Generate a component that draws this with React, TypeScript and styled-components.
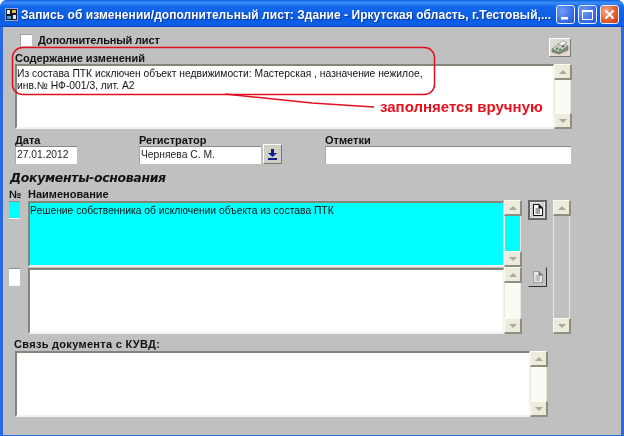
import React from "react";
import styled, { createGlobalStyle } from "styled-components";

const Global = createGlobalStyle`
  html, body { margin: 0; padding: 0; background: #fff; }
  body { width: 624px; height: 436px; overflow: hidden; font-family: "Liberation Sans", Arial, sans-serif; }
`;

const Win = styled.div`
  position: relative;
  width: 624px;
  height: 436px;
  box-sizing: border-box;
  background: #2a68e4;
  border-radius: 7px 7px 0 0;
  overflow: hidden;
  display: flex;
  flex-direction: column;
  filter: blur(0.35px);
`;

const TitleBar = styled.div`
  height: 27px;
  flex: none;
  box-sizing: border-box;
  display: flex;
  align-items: center;
  padding: 2px 5px 0 5px;
  background: linear-gradient(180deg, #1060e0 0%, #3d8ef6 10%, #1468ea 24%, #0a5ce2 70%, #0e60ea 90%, #0648c4 100%);
`;

const TitleText = styled.div`
  flex: 1;
  min-width: 0;
  margin-left: 3px;
  color: #fff;
  font: bold 12px/16px "Liberation Sans", sans-serif;
  letter-spacing: 0.05px;
  white-space: nowrap;
  text-shadow: 1px 1px 0 #0a3aa0;
`;

const WinBtn = styled.div<{ $close?: boolean }>`
  width: 19px;
  height: 19px;
  margin-left: 3px;
  flex: none;
  box-sizing: border-box;
  border: 1px solid #e8eefc;
  border-radius: 3px;
  background: ${p => (p.$close ? "radial-gradient(circle at 30% 30%, #f4a888, #dc5020 70%, #c43c14)" : "radial-gradient(circle at 30% 30%, #6f9cf4, #3468e6 70%, #2250d0)")};
  display: flex;
  align-items: center;
  justify-content: center;
`;

const Client = styled.div`
  flex: 1;
  margin: 0 3px 1px;
  background: #c0c0c0;
  padding: 7px 50px 0 6px;
  display: flex;
  flex-direction: column;
`;

const Label = styled.div`
  font: bold 11px/12px "Liberation Sans", sans-serif;
  color: #111;
  white-space: nowrap;
`;

const HeaderRow = styled.div`
  height: 30px;
  margin-left: 6px;
  display: flex;
  justify-content: space-between;
`;

const HeaderLeft = styled.div`
  display: flex;
  flex-direction: column;
  justify-content: space-between;
`;

const CheckRow = styled.div`
  display: flex;
  align-items: center;
  gap: 6px;
  padding-left: 5px;
`;

const CheckLabel = styled(Label)`
  letter-spacing: -0.15px;
`;

const CheckBox = styled.div`
  width: 12px;
  height: 12px;
  background: #fff;
  border-top: 1px solid #a0a0a0;
  border-left: 1px solid #a0a0a0;
  box-sizing: border-box;
`;

const PrintBtn = styled.div`
  width: 22px;
  height: 19px;
  margin-top: 4px;
  box-sizing: border-box;
  background: #dedcd2;
  border: 1px solid;
  border-color: #fff #777 #777 #fff;
  display: flex;
  align-items: center;
  justify-content: center;
`;

const Editor = styled.div<{ $w: number; $h: number }>`
  display: flex;
  width: ${p => p.$w}px;
  height: ${p => p.$h}px;
  margin-left: 6px;
  flex: none;
`;

const Inset = styled.div<{ $bg?: string; $top?: number }>`
  flex: 1;
  min-width: 0;
  box-sizing: border-box;
  margin-top: ${p => p.$top ?? 0}px;
  background: ${p => p.$bg || "#fff"};
  border-top: 2px solid #858578;
  border-left: 2px solid #858578;
  border-right: 1px solid #f2f2f2;
  border-bottom: 2px solid #f2f2f2;
  padding: 2px 0 0 0;
  font: 10.3px/12px "Liberation Sans", sans-serif;
  color: #111;
`;

const Scroll = styled.div<{ $track?: string }>`
  width: 17px;
  flex: none;
  display: flex;
  flex-direction: column;
  background: ${p => p.$track || "#fbfbf5"};
  box-sizing: border-box;
  border-left: 1px solid #e8e8dc;
  border-right: 1px solid #e8e8dc;
`;

const ScrollBtn = styled.div`
  height: 16px;
  width: 18px;
  margin-left: -1px;
  flex: none;
  box-sizing: border-box;
  background: #ecebdc;
  border-top: 1px solid #fbfbf2;
  border-left: 1px solid #fbfbf2;
  border-right: 2px solid #8f8f80;
  border-bottom: 2px solid #8f8f80;
  display: flex;
  align-items: center;
  justify-content: center;
`;

const Track = styled.div`
  flex: 1;
`;

const Arrow = ({ down }: { down?: boolean }) => (
  <svg width="8" height="4" viewBox="0 0 8 4">
    <path d={down ? "M0 0H8L4 4Z" : "M4 0L8 4H0Z"} fill="#aaa99a" />
  </svg>
);

const ScrollBar = ({ track, thumb }: { track?: string; thumb?: string }) => (
  <Scroll $track={track}>
    <ScrollBtn><Arrow /></ScrollBtn>
    <Track style={thumb ? { background: thumb } : undefined} />
    <ScrollBtn><Arrow down /></ScrollBtn>
  </Scroll>
);

const FieldsRow = styled.div`
  margin: 5px 0 0 6px;
  display: flex;
`;

const Field = styled.div<{ $w: number }>`
  width: ${p => p.$w}px;
  flex: none;
`;

const FieldInput = styled.div<{ $w: number }>`
  width: ${p => p.$w}px;
  height: 18px;
  box-sizing: border-box;
  background: #fff;
  border-top: 1px solid #888;
  border-left: 1px solid #aaa;
  font: 10.3px/16px "Liberation Sans", sans-serif;
  color: #222;
  padding-left: 1px;
  white-space: nowrap;
`;

const InputWithBtn = styled.div`
  display: flex;
  align-items: flex-start;
  gap: 2px;
`;

const DropBtn = styled.div`
  width: 19px;
  height: 20px;
  margin-top: -2px;
  flex: none;
  box-sizing: border-box;
  background: #cfcfc4;
  border: 1px solid;
  border-color: #fff #777 #777 #fff;
  display: flex;
  align-items: center;
  justify-content: center;
`;

const Heading = styled.div`
  margin: 6px 0 0 1px;
  font: italic bold 13px/15px "DejaVu Sans", sans-serif;
  letter-spacing: -0.35px;
  color: #111;
  transform: scaleX(0.96);
  transform-origin: left;
`;

const ColHead = styled.div`
  display: flex;
  margin-top: 3px;
  height: 12px;
`;

const NumHead = styled(Label)`
  width: 19px;
  flex: none;
`;

const Docs = styled.div`
  display: flex;
`;

const DocRows = styled.div`
  width: 512px;
  flex: none;
  display: flex;
  flex-direction: column;
`;

const DocRow = styled.div`
  display: flex;
  height: 67px;
`;

const Num = styled.div<{ $bg: string }>`
  width: 11px;
  height: 18px;
  margin: 1px 8px 0 0;
  flex: none;
  background: ${p => p.$bg};
  border-bottom: 1px solid #f4f4f4;
  border-top: 1px solid #8f8f8f;
  box-sizing: border-box;
`;

const Tools = styled.div`
  width: 32px;
  flex: none;
  display: flex;
  flex-direction: column;
  padding-left: 7px;
  box-sizing: border-box;
  gap: 47px;
`;

const DocBtn = styled.div<{ $active?: boolean }>`
  width: 19px;
  height: 20px;
  box-sizing: border-box;
  display: flex;
  align-items: center;
  justify-content: center;
  border: ${p => (p.$active ? "2px solid #666" : "1px solid")};
  border-color: ${p => (p.$active ? "#666" : "transparent #333 #333 transparent")};
  background: ${p => (p.$active ? "#d0d0c8" : "transparent")};
  outline: ${p => (p.$active ? "1px dotted #fff" : "none")};
  outline-offset: ${p => (p.$active ? "-3px" : "0")};
`;

const LinkLabel = styled(Label)`
  margin: 4px 0 1px 5px;
  height: 12px;
  letter-spacing: 0.3px;
`;

const Annotation = styled.div`
  position: absolute;
  inset: 0;
  pointer-events: none;
`;

const Callout = styled.span`
  position: absolute;
  left: 380px;
  top: 98px;
  color: #e8101c;
  font: bold 15px/18px "Liberation Sans", sans-serif;
  white-space: nowrap;
`;

const AppIcon = () => (
  <svg width="13" height="13" viewBox="0 0 13 13" style={{ flex: "none" }}>
    <rect x="0.5" y="0.5" width="12" height="12" fill="#10182c" stroke="#9aa8c8" />
    <rect x="2" y="2" width="3" height="4" fill="#f0f0f0" />
    <rect x="7" y="2" width="4" height="3" fill="#e8c040" />
    <rect x="2" y="8" width="4" height="3" fill="#40a0e0" />
    <rect x="8" y="7" width="3" height="4" fill="#e8e8e8" />
  </svg>
);

const Printer = () => (
  <svg width="18" height="15" viewBox="0 0 18 15">
    <path d="M1 9L8 12L17 6V10L8 14L1 12Z" fill="#8a8a80" stroke="#555" strokeWidth=".5" />
    <path d="M1 9L9 3L17 6L8 12Z" fill="#c8d0c0" stroke="#666" strokeWidth=".5" />
    <path d="M7 4L12 0.8L16 2.5L11 5.6Z" fill="#fff" stroke="#666" strokeWidth=".5" />
    <path d="M5 9L7 8M8 10L10 9" stroke="#2a8a30" strokeWidth="1.4" />
    <path d="M11 7L13 6" stroke="#333" strokeWidth="1.2" />
  </svg>
);

const DocIcon = ({ dark }: { dark?: boolean }) => (
  <svg width="10" height="12" viewBox="0 0 10 12">
    <path d="M0.5 0.5H6L9.5 4V11.5H0.5Z" fill={dark ? "#fff" : "#e8e8e8"} stroke={dark ? "#111" : "#666"} strokeDasharray={dark ? undefined : "1 1"} />
    <path d="M2.5 5H7M2.5 7H7M2.5 9H7" stroke={dark ? "#444" : "#999"} />
    <path d="M6 0.5V4H9.5" fill={dark ? "#111" : "#888"} stroke={dark ? "#111" : "#666"} />
  </svg>
);

export default function App() {
  return (
    <>
      <Global />
      <Win>
        <TitleBar>
          <AppIcon />
          <TitleText>Запись об изменении/дополнительный лист: Здание - Иркутская область, г.Тестовый,...</TitleText>
          <WinBtn>
            <svg width="11" height="11" viewBox="0 0 11 11"><rect x="1" y="8" width="7" height="2.5" fill="#fff" /></svg>
          </WinBtn>
          <WinBtn>
            <svg width="11" height="11" viewBox="0 0 11 11"><path d="M0.5 2.5H10.5V10.5H0.5Z" fill="none" stroke="#fff" /><rect x="0" y="1" width="11" height="2" fill="#fff" /></svg>
          </WinBtn>
          <WinBtn $close>
            <svg width="11" height="11" viewBox="0 0 11 11"><path d="M1.5 1.5L9.5 9.5M9.5 1.5L1.5 9.5" stroke="#fff" strokeWidth="2" /></svg>
          </WinBtn>
        </TitleBar>
        <Client>
          <HeaderRow>
            <HeaderLeft>
              <CheckRow>
                <CheckBox />
                <CheckLabel>Дополнительный лист</CheckLabel>
              </CheckRow>
              <Label>Содержание изменений</Label>
            </HeaderLeft>
            <PrintBtn><Printer /></PrintBtn>
          </HeaderRow>
          <Editor $w={556} $h={65}>
            <Inset>
              Из состава ПТК исключен объект недвижимости: Мастерская , назначение нежилое,
              <br />
              инв.№ НФ-001/3, лит. А2
            </Inset>
            <ScrollBar />
          </Editor>
          <FieldsRow>
            <Field $w={124}>
              <Label>Дата</Label>
              <FieldInput $w={62}>27.01.2012</FieldInput>
            </Field>
            <Field $w={186}>
              <Label>Регистратор</Label>
              <InputWithBtn>
                <FieldInput $w={122}>Черняева С. М.</FieldInput>
                <DropBtn>
                  <svg width="9" height="11" viewBox="0 0 9 11"><path d="M3 0H6V4H9L4.5 8L0 4H3Z" fill="#101c90" /><rect x="0" y="9" width="9" height="2" fill="#101c90" /></svg>
                </DropBtn>
              </InputWithBtn>
            </Field>
            <Field $w={246}>
              <Label>Отметки</Label>
              <FieldInput $w={246} />
            </Field>
          </FieldsRow>
          <Heading>Документы-основания</Heading>
          <ColHead>
            <NumHead>№</NumHead>
            <Label>Наименование</Label>
          </ColHead>
          <Docs>
            <DocRows>
              <DocRow>
                <Num $bg="#00ffff" />
                <Inset $bg="#00ffff" $top={1}>Решение собственника об исключении объекта из состава ПТК</Inset>
                <ScrollBar thumb="#00ffff" />
              </DocRow>
              <DocRow>
                <Num $bg="#fff" />
                <Inset $top={1} />
                <ScrollBar />
              </DocRow>
            </DocRows>
            <Tools>
              <DocBtn $active><DocIcon dark /></DocBtn>
              <DocBtn><DocIcon /></DocBtn>
            </Tools>
            <ScrollBar track="#c0c0c0" />
          </Docs>
          <LinkLabel>Связь документа с КУВД:</LinkLabel>
          <Editor $w={532} $h={66}>
            <Inset />
            <ScrollBar />
          </Editor>
        </Client>
        <Annotation>
          <svg width="624" height="130" viewBox="0 0 624 130">
            <rect x="12.5" y="47.5" width="422" height="47" rx="10" fill="none" stroke="#e01020" strokeWidth="1.5" />
            <path d="M225 94L312 103L374 107" fill="none" stroke="#e01020" strokeWidth="1.5" />
          </svg>
          <Callout>заполняется вручную</Callout>
        </Annotation>
      </Win>
    </>
  );
}
